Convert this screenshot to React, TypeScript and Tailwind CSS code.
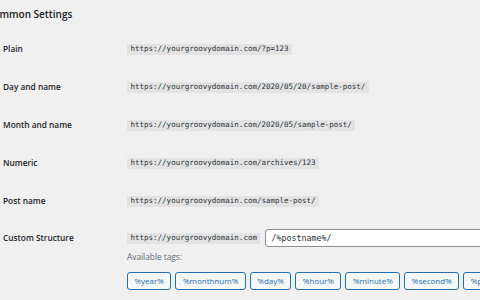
import React from "react";

const rows = [
  { label: "Plain", url: "https://yourgroovydomain.com/?p=123" },
  { label: "Day and name", url: "https://yourgroovydomain.com/2020/05/20/sample-post/" },
  { label: "Month and name", url: "https://yourgroovydomain.com/2020/05/sample-post/" },
  { label: "Numeric", url: "https://yourgroovydomain.com/archives/123" },
  { label: "Post name", url: "https://yourgroovydomain.com/sample-post/" },
];

const tags = ["%year%", "%monthnum%", "%day%", "%hour%", "%minute%", "%second%", "%post_id%", "%postname%"];

const sans = { fontFamily: '"Open Sans", "Noto Sans", sans-serif' };
const mono = { fontFamily: '"DejaVu Sans Mono", "Liberation Mono", monospace' };

function Code({ children }: { children: React.ReactNode }) {
  return (
    <span
      className="inline-flex h-[11px] items-center bg-[#e3e3e4] px-[3.5px] text-[7.5px] leading-none text-[#2c3338] whitespace-nowrap"
      style={mono}
    >
      {children}
    </span>
  );
}

export default function App() {
  return (
    <div className="w-[480px] h-[300px] overflow-hidden bg-[#f0f0f1] text-[#1d2327]" style={sans}>
      <div className="h-[28px] flex items-center ml-[-13px] text-[10px] font-semibold whitespace-nowrap">
        Common Settings
      </div>
      <div className="pt-[2px]">
        {rows.map((r) => (
          <div key={r.label} className="h-[38px] flex items-center">
            <div className="w-[127px] pl-[3px] text-[8.3px] font-semibold">{r.label}</div>
            <Code>{r.url}</Code>
          </div>
        ))}
      </div>
      <div className="mt-[9px] flex">
        <div className="w-[127px] pl-[3px] h-[18px] flex items-center text-[8.3px] font-semibold whitespace-nowrap">
          Custom Structure
        </div>
        <div className="flex-1 min-w-0">
          <div className="flex items-center h-[18px]">
            <Code>https://yourgroovydomain.com</Code>
            <div className="ml-[5px] h-[18px] flex-1 min-w-[240px] bg-white border border-[#8c8f94] rounded-[3px] flex items-center pl-[5px] text-[8.3px] text-[#2c3338]" style={mono}>
              /%postname%/
            </div>
          </div>
          <div className="mt-[3px] h-[14px] flex items-center text-[8.3px] text-[#646970]">Available tags:</div>
          <div className="mt-[8px] flex gap-[4px] whitespace-nowrap">
            {tags.map((t) => (
              <span
                key={t}
                className="shrink-0 h-[18px] px-[6.5px] flex items-center border border-[#2271b1] rounded-[3px] bg-[#f6f7f7] text-[#2271b1] text-[8px]"
              >
                {t}
              </span>
            ))}
          </div>
        </div>
      </div>
    </div>
  );
}
